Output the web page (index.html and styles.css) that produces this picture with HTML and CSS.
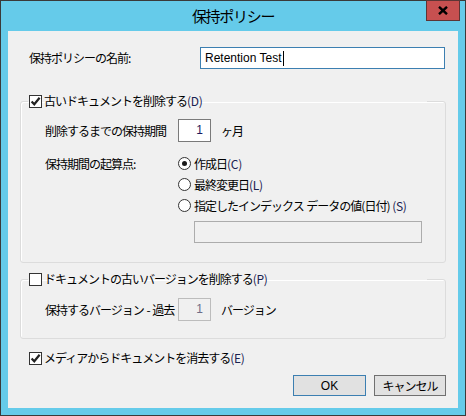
FILE: index.html
```html
<!DOCTYPE html>
<html lang="ja">
<head>
    <meta charset="UTF-8">
    <title>保持ポリシー</title>
    <link rel="stylesheet" href="styles.css">
</head>
<body>
    <div class="window">
        <!-- Title bar -->
        <div class="titlebar">
            <span></span>
            <span class="title">保持ポリシー</span>
            <button class="close" type="button">
                <svg width="10" height="9" viewBox="0 0 10 9"><path d="M1 0.8 L9 8.2 M9 0.8 L1 8.2" stroke="#000" stroke-width="2.4"/></svg>
            </button>
        </div>

        <div class="content">
            <!-- Policy name -->
            <div class="name-row">
                <span class="label">保持ポリシーの名前:</span>
                <div class="textbox focused">Retention Test<span class="caret"></span></div>
            </div>

            <!-- Delete old documents -->
            <fieldset class="group first">
                <legend>
                    <span class="check on"><svg width="11" height="11" viewBox="0 0 11 11"><path d="M1.6 5.4 L4.3 8.3 L9.6 1.8" fill="none" stroke="#222" stroke-width="2.2"/></svg></span>
                    <span>古いドキュメントを削除する<span class="key">(D)</span></span>
                </legend>
                <div class="group-body">
                    <div class="row">
                        <span class="label-col">削除するまでの保持期間</span>
                        <div class="spin-row">
                            <span class="spin">1</span>
                            <span>ヶ月</span>
                        </div>
                    </div>
                    <div class="row start">
                        <span class="label-col">保持期間の起算点:</span>
                        <div class="radios">
                            <div class="radio-row"><span class="radio on"></span><span>作成日<span class="key">(C)</span></span></div>
                            <div class="radio-row"><span class="radio"></span><span>最終変更日<span class="key">(L)</span></span></div>
                            <div class="radio-row"><span class="radio"></span><span>指定したインデックス データの値(日付) <span class="key">(S)</span></span></div>
                            <div class="date-field"></div>
                        </div>
                    </div>
                </div>
            </fieldset>

            <!-- Delete old versions -->
            <fieldset class="group second">
                <legend>
                    <span class="check"></span>
                    <span>ドキュメントの古いバージョンを削除する<span class="key">(P)</span></span>
                </legend>
                <div class="group-body">
                    <div class="row">
                        <span class="label-col">保持するバージョン - 過去</span>
                        <div class="spin-row">
                            <span class="spin disabled">1</span>
                            <span>バージョン</span>
                        </div>
                    </div>
                </div>
            </fieldset>

            <div class="check-row">
                <span class="check on"><svg width="11" height="11" viewBox="0 0 11 11"><path d="M1.6 5.4 L4.3 8.3 L9.6 1.8" fill="none" stroke="#222" stroke-width="2.2"/></svg></span>
                <span>メディアからドキュメントを消去する<span class="key">(E)</span></span>
            </div>

            <div class="buttons">
                <button type="button" class="btn default">OK</button>
                <button type="button" class="btn">キャンセル</button>
            </div>
        </div>
    </div>
</body>
</html>
```

FILE: styles.css
```css
/* General */
body {
    margin: 0;
    font-family: "Noto Sans CJK JP", "Liberation Sans", sans-serif;
    font-size: 12px;
    line-height: 16px;
    letter-spacing: -1px;
    word-spacing: 1px;
    color: #000;
    background: #fff;
}

.key {
    letter-spacing: -0.3px;
    color: #1a2250;
}

.window {
    width: 466px;
    height: 416px;
    box-sizing: border-box;
    border: 1px solid #3a3a3a;
    background-color: #65cbea;
    padding: 0 7px 7px 7px;
    display: flex;
    flex-direction: column;
}

/* Title bar */
.titlebar {
    height: 30px;
    display: grid;
    grid-template-columns: 1fr auto 1fr;
    align-items: center;
}

.title {
    font-size: 15px;
    letter-spacing: -1.3px;
    line-height: 20px;
}

.close {
    justify-self: end;
    align-self: start;
    margin-top: -1px;
    margin-right: -2px;
    width: 34px;
    height: 21px;
    padding: 0;
    border: 1px solid #5d3535;
    background-color: #c75050;
    display: flex;
    align-items: center;
    justify-content: center;
}

/* Content */
.content {
    flex: 1;
    background-color: #f0f0f0;
    padding: 16px 12px 12px 12px;
    display: flex;
    flex-direction: column;
}

.name-row {
    display: grid;
    grid-template-columns: 171px 245px;
    align-items: center;
    padding-left: 9px;
}

.textbox {
    height: 22px;
    box-sizing: border-box;
    border: 1px solid #7a7a7a;
    background: #fff;
    padding: 0 4px;
    font-family: "Liberation Sans", sans-serif;
    letter-spacing: 0;
    word-spacing: 0;
    line-height: 20px;
    display: flex;
    align-items: center;
}

.textbox.focused {
    border-color: #3c7fb1;
}

.caret {
    width: 1px;
    height: 15px;
    background: #000;
    margin-left: 1px;
}

/* Group boxes */
.group {
    margin: 24px 0 0 0;
    padding: 0;
    border: 1px solid #dcdcdc;
    border-radius: 3px;
    box-shadow: inset 1px 1px 0 #fff;
}

.group.second {
    margin-top: 8px;
}

legend {
    margin-left: 7px;
    width: 399px;
    box-sizing: border-box;
    padding: 0 0 0 1px;
    display: flex;
    align-items: center;
    gap: 2px;
    line-height: 16px;
}

.group-body {
    padding: 10px 0 19px 24px;
    display: flex;
    flex-direction: column;
    gap: 11px;
}

.group.second .group-body {
    padding: 11px 0 17px 24px;
}

.row {
    display: grid;
    grid-template-columns: 133px auto;
    align-items: center;
}

.row.start {
    align-items: start;
}

.row.start .label-col {
    line-height: 21px;
}

.spin-row {
    display: flex;
    align-items: center;
    gap: 10px;
}

.spin {
    width: 33px;
    height: 23px;
    box-sizing: border-box;
    border: 1px solid #7a7a7a;
    background: #fff;
    text-align: right;
    padding-right: 7px;
    line-height: 21px;
    color: #1b1b5e;
    font-family: "Liberation Sans", sans-serif;
    letter-spacing: 0;
}

.spin.disabled {
    border-color: #bcbcbc;
    background: #f0f0f0;
    color: #6d6d88;
}

/* Checkboxes and radios */
.check {
    width: 13px;
    height: 13px;
    box-sizing: border-box;
    border: 1px solid #333;
    background: #fff;
    display: flex;
    align-items: center;
    justify-content: center;
    flex-shrink: 0;
}

.radios {
    display: flex;
    flex-direction: column;
}

.radio-row {
    height: 21px;
    display: flex;
    align-items: center;
    gap: 3px;
}

.radio {
    width: 13px;
    height: 13px;
    box-sizing: border-box;
    border: 1px solid #333;
    border-radius: 50%;
    background: #fff;
    display: flex;
    align-items: center;
    justify-content: center;
}

.radio.on::after {
    content: "";
    width: 5px;
    height: 5px;
    border-radius: 50%;
    background: #1a1a1a;
}

.date-field {
    margin: 5px 0 0 16px;
    width: 228px;
    height: 22px;
    box-sizing: border-box;
    border: 1px solid #acacac;
    background: #f0f0f0;
}

.check-row {
    margin-top: 11px;
    padding-left: 9px;
    display: flex;
    align-items: center;
    gap: 2px;
    line-height: 16px;
}

/* Buttons */
.buttons {
    margin-top: 9px;
    display: flex;
    justify-content: flex-end;
    gap: 8px;
}

.btn {
    width: 72px;
    height: 21px;
    padding: 0;
    border: 1px solid #707070;
    background-color: #e1e1e1;
    font-family: inherit;
    font-size: 12px;
    letter-spacing: -1px;
    color: #000;
}

.btn.default {
    width: 73px;
    border-color: #3c7fb1;
    font-family: "Liberation Sans", sans-serif;
    letter-spacing: 0;
}
```
